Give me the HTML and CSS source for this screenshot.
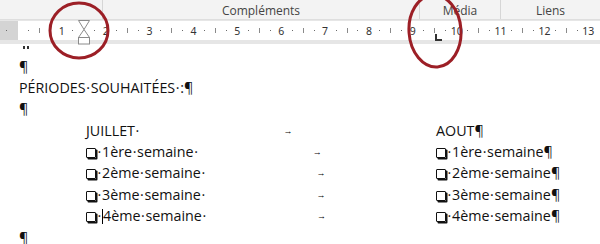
FILE: index.html
```html
<!DOCTYPE html>
<html lang="fr">
<head>
    <meta charset="UTF-8">
    <title>Périodes souhaitées</title>
    <link rel="stylesheet" href="styles.css">
</head>
<body>
    <div class="ribbon">
        <div class="grp grp-first"></div>
        <div class="grp grp-compl">Compléments</div>
        <div class="grp grp-media">Média</div>
        <div class="grp grp-liens">Liens</div>
    </div>

    <div class="ruler-bar">
        <div class="ruler">
            <span class="s d"></span><span class="s"></span>
            <span class="s d"></span><span class="s t"></span><span class="s d"></span><span class="s n">1</span>
            <span class="s d"></span><span class="s"></span><span class="s d"></span><span class="s n">2</span>
            <span class="s d"></span><span class="s t"></span><span class="s d"></span><span class="s n">3</span>
            <span class="s d"></span><span class="s t"></span><span class="s d"></span><span class="s n">4</span>
            <span class="s d"></span><span class="s t"></span><span class="s d"></span><span class="s n">5</span>
            <span class="s d"></span><span class="s t"></span><span class="s d"></span><span class="s n">6</span>
            <span class="s d"></span><span class="s t"></span><span class="s d"></span><span class="s n">7</span>
            <span class="s d"></span><span class="s t"></span><span class="s d"></span><span class="s n">8</span>
            <span class="s d"></span><span class="s t"></span><span class="s d"></span><span class="s n">9</span>
            <span class="s d"></span><span class="s t"></span><span class="s d"></span><span class="s n">10</span>
            <span class="s d"></span><span class="s t"></span><span class="s d"></span><span class="s n">11</span>
            <span class="s d"></span><span class="s t"></span><span class="s d"></span><span class="s n">12</span>
            <span class="s d"></span><span class="s t"></span><span class="s d"></span><span class="s n">13</span>

            <!-- indent marker -->
            <svg class="indent" width="12" height="25" viewBox="0 0 12 25">
                <polygon points="0.5,0.5 11.5,0.5 6,9.5" fill="#fff" stroke="#8a8a8a"/>
                <polygon points="6,9.5 11.5,17.5 0.5,17.5" fill="#fff" stroke="#8a8a8a"/>
                <rect x="0.5" y="17.5" width="11" height="6.5" fill="#fff" stroke="#8a8a8a"/>
            </svg>
            <!-- left tab stop -->
            <span class="tabstop"></span>
        </div>
    </div>

    <div class="page">
        <div class="cut"></div>
        <p class="line">¶</p>
        <p class="line">PÉRIODES<b class="sp">·</b>SOUHAITÉES<b class="sp">·</b>:¶</p>
        <p class="line">¶</p>
        <div class="line row">
            <div class="c1"><span>JUILLET<b class="sp">·</b></span><span class="tab">→</span></div>
            <div class="c2">AOUT¶</div>
        </div>
        <div class="line row">
            <div class="c1"><span><i class="box"></i><b class="sp">·</b>1ère<b class="sp">·</b>semaine<b class="sp">·</b></span><span class="tab">→</span></div>
            <div class="c2"><i class="box"></i><b class="sp">·</b>1ère<b class="sp">·</b>semaine¶</div>
        </div>
        <div class="line row">
            <div class="c1"><span><i class="box"></i><b class="sp">·</b>2ème<b class="sp">·</b>semaine<b class="sp">·</b></span><span class="tab">→</span></div>
            <div class="c2"><i class="box"></i><b class="sp">·</b>2ème<b class="sp">·</b>semaine¶</div>
        </div>
        <div class="line row">
            <div class="c1"><span><i class="box"></i><b class="sp">·</b>3ème<b class="sp">·</b>semaine<b class="sp">·</b></span><span class="tab">→</span></div>
            <div class="c2"><i class="box"></i><b class="sp">·</b>3ème<b class="sp">·</b>semaine¶</div>
        </div>
        <div class="line row">
            <div class="c1"><span><i class="box"></i><b class="sp">·</b><i class="caret"></i>4ème<b class="sp">·</b>semaine<b class="sp">·</b></span><span class="tab">→</span></div>
            <div class="c2"><i class="box"></i><b class="sp">·</b>4ème<b class="sp">·</b>semaine¶</div>
        </div>
        <p class="line">¶</p>
    </div>

    <!-- red annotation circles -->
    <svg class="marks" width="600" height="244" viewBox="0 0 600 244">
        <ellipse cx="79" cy="30.5" rx="29" ry="27.5" fill="none" stroke="#9c1f26" stroke-width="3"/>
        <ellipse cx="435" cy="31" rx="26" ry="36" fill="none" stroke="#9c1f26" stroke-width="3" transform="rotate(-4 435 31)"/>
    </svg>
</body>
</html>
```

FILE: styles.css
```css
body {
    margin: 0;
    width: 600px;
    height: 244px;
    overflow: hidden;
    position: relative;
    background-color: #fff;
    font-family: "Open Sans", "Liberation Sans", sans-serif;
}

/* ribbon group labels */
.ribbon {
    display: flex;
    height: 20px;
    background-color: #f3f3f3;
    border-bottom: 1px solid #dedede;
    box-sizing: border-box;
    font-size: 12px;
    color: #444;
}
.grp {
    text-align: center;
    line-height: 21px;
}
.grp-first { width: 102px; }
.grp-compl { width: 316px; border-left: 1px solid #d6d6d6; }
.grp-media { width: 80px; border-left: 1px solid #d6d6d6; }
.grp-liens { flex: 1; border-left: 1px solid #d6d6d6; }

/* ruler */
.ruler-bar {
    background-color: #e6e6e6;
    padding: 1px 0 4px;
}
.ruler {
    position: relative;
    display: flex;
    align-items: center;
    height: 19px;
    padding-left: 1.5px;
    background: linear-gradient(to right, #d4d4d4 18px, #fff 18px);
    font-family: "Noto Sans", sans-serif;
    font-size: 10.5px;
    color: #333;
}
.s {
    flex: none;
    width: 10.975px;
    display: flex;
    justify-content: center;
    align-items: center;
}
.s.d::before {
    content: "";
    width: 1px;
    height: 1px;
    background-color: #6a6a6a;
}
.s.t::before {
    content: "";
    width: 1px;
    height: 5px;
    background-color: #8a8a8a;
}
.indent {
    position: absolute;
    left: 78px;
    top: -1px;
}
.tabstop {
    position: absolute;
    left: 435px;
    top: 13px;
    width: 7px;
    height: 7px;
    border-left: 2px solid #333;
    border-bottom: 2px solid #333;
    box-sizing: border-box;
}

/* document */
.page {
    padding-left: 19px;
    font-size: 14.3px;
    color: #111;
}
.cut {
    width: 2px;
    height: 3px;
    margin: 2px 0 6.5px 4px;
    border-left: 2px solid #333;
    border-right: 2px solid #333;
}
.line {
    margin: 0;
    height: 21.4px;
    line-height: 21.4px;
    white-space: nowrap;
}
.sp {
    display: inline-block;
    width: 5px;
    text-align: center;
    font-weight: normal;
}
.row {
    display: flex;
    padding-left: 67px;
}
.c1 {
    display: flex;
    width: 350px;
}
.tab {
    flex: 1;
    text-align: center;
    font-size: 9px;
    font-weight: bold;
    color: #000;
}
.box {
    display: inline-block;
    width: 8px;
    height: 8px;
    border: 1.4px solid #111;
    border-radius: 1px;
    box-shadow: 1.5px 1.5px 0 #111;
    margin-right: 1px;
    vertical-align: -1px;
}
.caret {
    display: inline-block;
    width: 0;
    height: 15px;
    border-left: 1px solid #000;
    vertical-align: -3px;
}

.marks {
    position: absolute;
    left: 0;
    top: 0;
    pointer-events: none;
}
```
